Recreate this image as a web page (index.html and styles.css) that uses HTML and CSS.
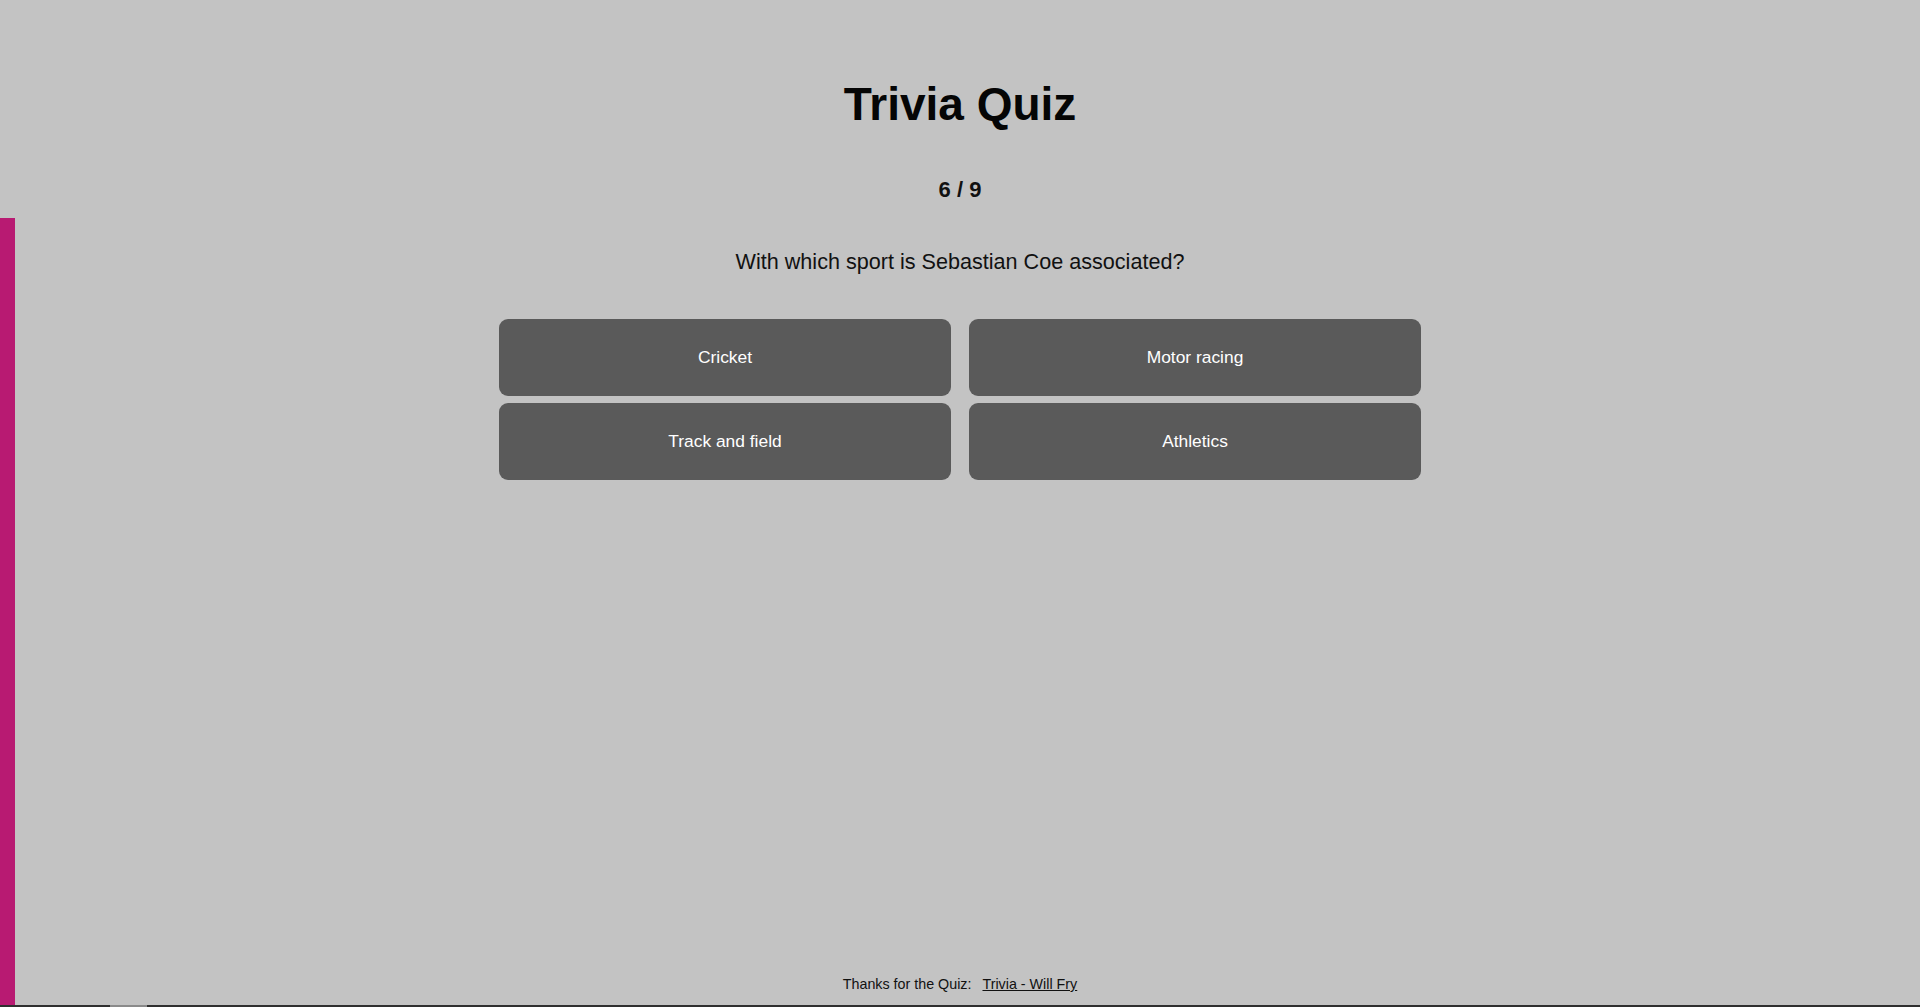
FILE: index.html
```html
<!DOCTYPE html>
<html lang="en">
<head>
<meta charset="utf-8">
<title>Trivia Quiz</title>
<link rel="stylesheet" href="styles.css">
</head>
<body>
<div class="progress" style="height: 787px;"></div>
<div class="page">
  <main class="quiz">
    <h1 class="title">Trivia Quiz</h1>
    <div class="counter">6 / 9</div>
    <p class="question">With which sport is Sebastian Coe associated?</p>
    <div class="answers">
      <button class="answer">Cricket</button>
      <button class="answer">Motor racing</button>
      <button class="answer">Track and field</button>
      <button class="answer">Athletics</button>
    </div>
  </main>
  <footer class="footer">Thanks for the Quiz: <a class="footer-link" href="#">Trivia - Will Fry</a></footer>
  <div class="bottom-bar"><div class="bottom-thumb"></div></div>
</div>
</body>
</html>
```

FILE: styles.css
```css
* { box-sizing: border-box; }
html, body { margin: 0; padding: 0; }
body {
  background: #c3c3c3;
  font-family: "Liberation Sans", Arial, sans-serif;
  color: #000;
  overflow: hidden;
}
.progress {
  position: fixed;
  left: 0;
  bottom: 2px;
  width: 15px;
  background: #b81a72;
}
.page {
  min-height: 1007px;
  display: flex;
  flex-direction: column;
  align-items: center;
}
.quiz {
  display: flex;
  flex-direction: column;
  align-items: center;
  padding-top: 78px;
}
.title {
  margin: 0;
  font-size: 46px;
  line-height: 52px;
  font-weight: bold;
  color: #050505;
}
.counter {
  margin-top: 47px;
  font-size: 22px;
  line-height: 26px;
  font-weight: bold;
  color: #111;
}
.question {
  margin: 46px 0 0;
  font-size: 21.6px;
  line-height: 25px;
  color: #111;
}
.answers {
  margin-top: 45px;
  display: grid;
  grid-template-columns: 452px 452px;
  column-gap: 18px;
  row-gap: 7px;
}
.answer {
  height: 77px;
  border: none;
  border-radius: 9px;
  background: #5a5a5a;
  color: #fff;
  font-family: "Liberation Sans", Arial, sans-serif;
  font-size: 17.4px;
  padding: 0;
  cursor: pointer;
}
.footer {
  margin-top: auto;
  padding-bottom: 12px;
  font-size: 14.3px;
  line-height: 17px;
  color: #111;
}
.footer-link {
  margin-left: 7px;
  color: #111;
  text-decoration: underline;
}
.bottom-bar {
  align-self: stretch;
  height: 2px;
  background: #2f2f2f;
  display: flex;
}
.bottom-thumb {
  margin-left: 110px;
  width: 37px;
  background: #8a8a8a;
}
```
